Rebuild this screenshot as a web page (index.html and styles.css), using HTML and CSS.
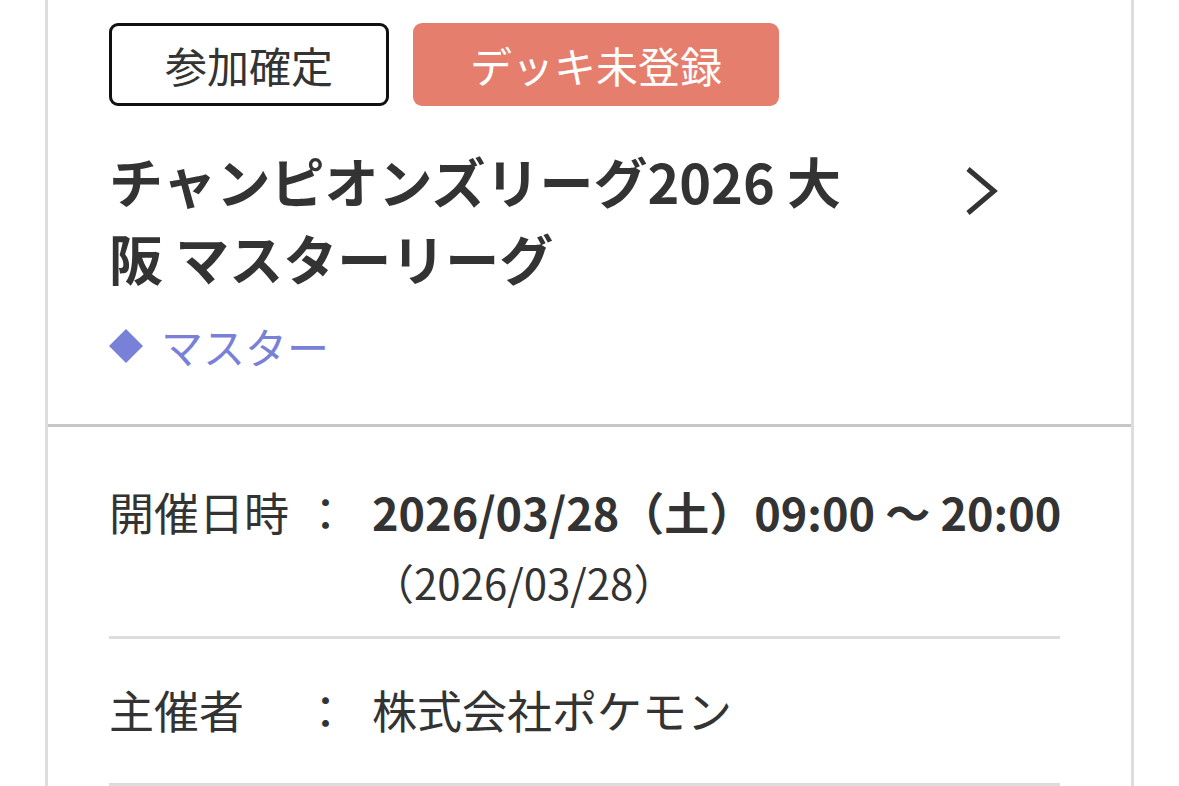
FILE: index.html
```html
<!DOCTYPE html>
<html lang="ja">
<head>
<meta charset="utf-8">
<title>大会詳細</title>
<link rel="stylesheet" href="styles.css">
</head>
<body>
<div class="card">
  <section class="head">
    <div class="badges">
      <span class="badge badge-outline">参加確定</span>
      <span class="badge badge-warn">デッキ未登録</span>
    </div>
    <div class="title-row">
      <h2 class="title">チャンピオンズリーグ2026 大阪 マスターリーグ</h2>
      <svg class="chev" width="32" height="50" viewBox="0 0 32 50" aria-hidden="true">
        <polyline points="2,3 28,25 2,47" fill="none" stroke="#333" stroke-width="5"/>
      </svg>
    </div>
    <div class="league"><span class="diamond"></span><span class="league-name">マスター</span></div>
  </section>
  <section class="details">
    <div class="row row-date">
      <div class="label">開催日時</div>
      <div class="colon">：</div>
      <div class="value">
        <div class="strong">2026/03/28（土）09:00 〜 20:00</div>
        <div class="sub">（2026/03/28）</div>
      </div>
    </div>
    <div class="row row-org">
      <div class="label">主催者</div>
      <div class="colon">：</div>
      <div class="value">株式会社ポケモン</div>
    </div>
  </section>
</div>
</body>
</html>
```
FILE: styles.css
```css
* { box-sizing: border-box; }
html, body { margin: 0; padding: 0; background: #fff; }
body {
  font-family: "Noto Sans CJK JP", "Noto Sans", sans-serif;
  color: #333;
  height: 786px;
  overflow: hidden;
}
.card {
  margin-left: 45px;
  width: 1089px;
  border-left: 3px solid #dddddd;
  border-right: 3px solid #dddddd;
  min-height: 786px;
}
.head {
  padding: 23px 71px 47px 61px;
  border-bottom: 3px solid #c6c6c6;
}
.badges {
  display: flex;
  gap: 24px;
}
.badge {
  height: 83px;
  display: inline-flex;
  align-items: center;
  justify-content: center;
  font-size: 42px;
  border-radius: 9px;
  line-height: 1;
}
.badge-outline {
  width: 280px;
  border: 3px solid #111;
  color: #333;
}
.badge-warn {
  width: 366px;
  background: #e67e6e;
  color: #fff;
}
.title-row {
  display: flex;
  align-items: flex-start;
  margin-top: 36px;
}
.title {
  margin: 0;
  flex: 0 0 760px;
  width: 760px;
  font-size: 54px;
  font-weight: 700;
  line-height: 77px;
  color: #333;
}
.chev {
  margin-left: 97px;
  margin-top: 24px;
  flex: none;
}
.league {
  margin-top: 18px;
  display: flex;
  align-items: center;
  font-size: 42px;
  line-height: 63px;
  color: #7880d8;
}
.diamond {
  width: 24px;
  height: 24px;
  background: #7880d8;
  transform: rotate(45deg);
  margin: 0 23px 0 5px;
}
.details {
  padding: 0 71px 0 61px;
}
.row {
  display: flex;
  align-items: flex-start;
  font-size: 45px;
  line-height: 70px;
  border-bottom: 3px solid #dddddd;
}
.row-date { padding: 50px 0 19px; }
.row-org { padding: 36px 0 38px; }
.label { width: 196px; flex: none; }
.colon { width: 42px; flex: none; text-align: center; margin-right: 25px; margin-left: -2px; }
.value { flex: 1; white-space: nowrap; padding-left: 2px; }
.strong { font-weight: 700; }
.sub { font-size: 42px; }
```
